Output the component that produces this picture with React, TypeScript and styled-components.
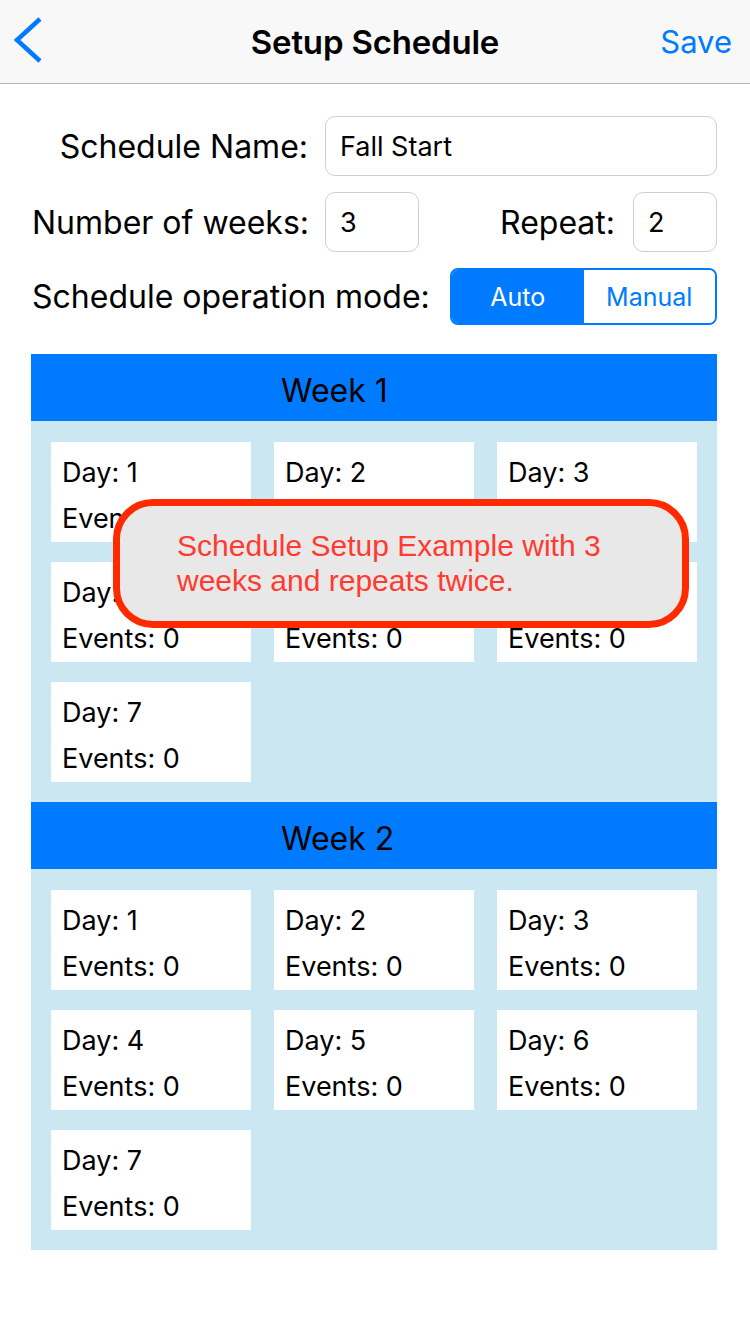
import React from "react";
import styled, { createGlobalStyle } from "styled-components";

const GlobalStyle = createGlobalStyle`
  html, body { margin: 0; padding: 0; background: #ffffff; }
  body { font-family: Inter, Roboto, "Noto Sans", sans-serif; color: #000; }
  * { box-sizing: border-box; }
`;

const Page = styled.div`
  position: relative;
  width: 750px;
  min-height: 1334px;
  background: #fff;
`;

const NavBar = styled.header`
  height: 84px;
  background: #f8f8f8;
  border-bottom: 1px solid #b4b4b4;
  display: grid;
  grid-template-columns: 120px 1fr 120px;
  align-items: center;
`;

const BackButton = styled.div`
  padding-left: 12px;
  margin-bottom: 4px;
  display: flex;
  align-items: center;
`;

const NavTitle = styled.div`
  text-align: center;
  font-size: 33px;
  font-weight: 600;
  letter-spacing: -0.2px;
`;

const NavAction = styled.div`
  text-align: right;
  padding-right: 18px;
  font-size: 31px;
  color: #007aff;
`;

const Form = styled.div`
  padding: 32px 33px 0 32px;
  display: flex;
  flex-direction: column;
  gap: 16px;
`;

const Row = styled.div<{ h?: number }>`
  display: flex;
  align-items: center;
  height: ${(p) => p.h ?? 60}px;
`;

const Label = styled.div<{ w?: number; right?: boolean }>`
  font-size: 32px;
  ${(p) => (p.w ? `width: ${p.w}px;` : "")}
  text-align: ${(p) => (p.right ? "right" : "left")};
  white-space: nowrap;
`;

const Field = styled.div<{ w: number; ml: number }>`
  width: ${(p) => p.w}px;
  margin-left: ${(p) => p.ml}px;
  height: 60px;
  border: 1px solid #cfcfcf;
  border-radius: 10px;
  display: flex;
  align-items: center;
  padding-left: 14px;
  font-size: 27px;
`;

const Spacer = styled.div`
  flex: 1;
`;

const Segmented = styled.div`
  margin-left: 18px;
  width: 267px;
  height: 57px;
  border: 2px solid #007aff;
  border-radius: 8px;
  display: grid;
  grid-template-columns: 1fr 1fr;
  overflow: hidden;
`;

const Segment = styled.div<{ active?: boolean }>`
  display: flex;
  align-items: center;
  justify-content: center;
  font-size: 25px;
  background: ${(p) => (p.active ? "#007aff" : "#fff")};
  color: ${(p) => (p.active ? "#fff" : "#007aff")};
`;

const Weeks = styled.div`
  margin: 29px 33px 0 31px;
  display: flex;
  flex-direction: column;
`;

const WeekHeader = styled.div`
  height: 67px;
  background: #007aff;
  display: flex;
  align-items: center;
  padding: 6px 0 0 250px;
  font-size: 32px;
`;

const WeekBody = styled.div`
  background: #cbe7f2;
  padding: 21px 21px 20px 20px;
  display: grid;
  grid-template-columns: repeat(3, 200px);
  column-gap: 23px;
  row-gap: 20px;
`;

const DayCard = styled.div`
  background: #fff;
  height: 100px;
  padding: 8px 0 0 11px;
  display: flex;
  flex-direction: column;
  font-size: 27px;
  line-height: 46px;
`;

const Callout = styled.div`
  position: absolute;
  left: 113px;
  top: 499px;
  width: 576px;
  height: 129px;
  border: 7px solid #ff2a00;
  border-radius: 40px;
  background: #e8e8e8;
  padding: 22px 0 0 57px;
  font-family: "Liberation Sans", Arial, sans-serif;
  font-size: 30px;
  line-height: 35px;
  color: #ff3b30;
`;

const days = [1, 2, 3, 4, 5, 6, 7];

function Week({ n }: { n: number }) {
  return (
    <>
      <WeekHeader>Week {n}</WeekHeader>
      <WeekBody>
        {days.map((d) => (
          <DayCard key={d}>
            <span>Day: {d}</span>
            <span>Events: 0</span>
          </DayCard>
        ))}
      </WeekBody>
    </>
  );
}

export default function App() {
  return (
    <Page>
      <GlobalStyle />
      <NavBar>
        <BackButton>
          <svg width="32" height="48" viewBox="0 0 32 48">
            <polyline
              points="28,3 5,24 28,45"
              fill="none"
              stroke="#007aff"
              strokeWidth="4.5"
              strokeLinecap="butt"
              strokeLinejoin="miter"
            />
          </svg>
        </BackButton>
        <NavTitle>Setup Schedule</NavTitle>
        <NavAction>Save</NavAction>
      </NavBar>
      <Form>
        <Row>
          <Label w={276} right>
            Schedule Name:
          </Label>
          <Field w={392} ml={17}>
            Fall Start
          </Field>
        </Row>
        <Row>
          <Label w={276}>Number of weeks:</Label>
          <Field w={94} ml={17}>
            3
          </Field>
          <Spacer />
          <Label>Repeat:</Label>
          <Field w={84} ml={18}>
            2
          </Field>
        </Row>
        <Row h={57}>
          <Label>Schedule operation mode:</Label>
          <Spacer />
          <Segmented>
            <Segment active>Auto</Segment>
            <Segment>Manual</Segment>
          </Segmented>
        </Row>
      </Form>
      <Weeks>
        <Week n={1} />
        <Week n={2} />
      </Weeks>
      <Callout>
        Schedule Setup Example with 3
        <br />
        weeks and repeats twice.
      </Callout>
    </Page>
  );
}
